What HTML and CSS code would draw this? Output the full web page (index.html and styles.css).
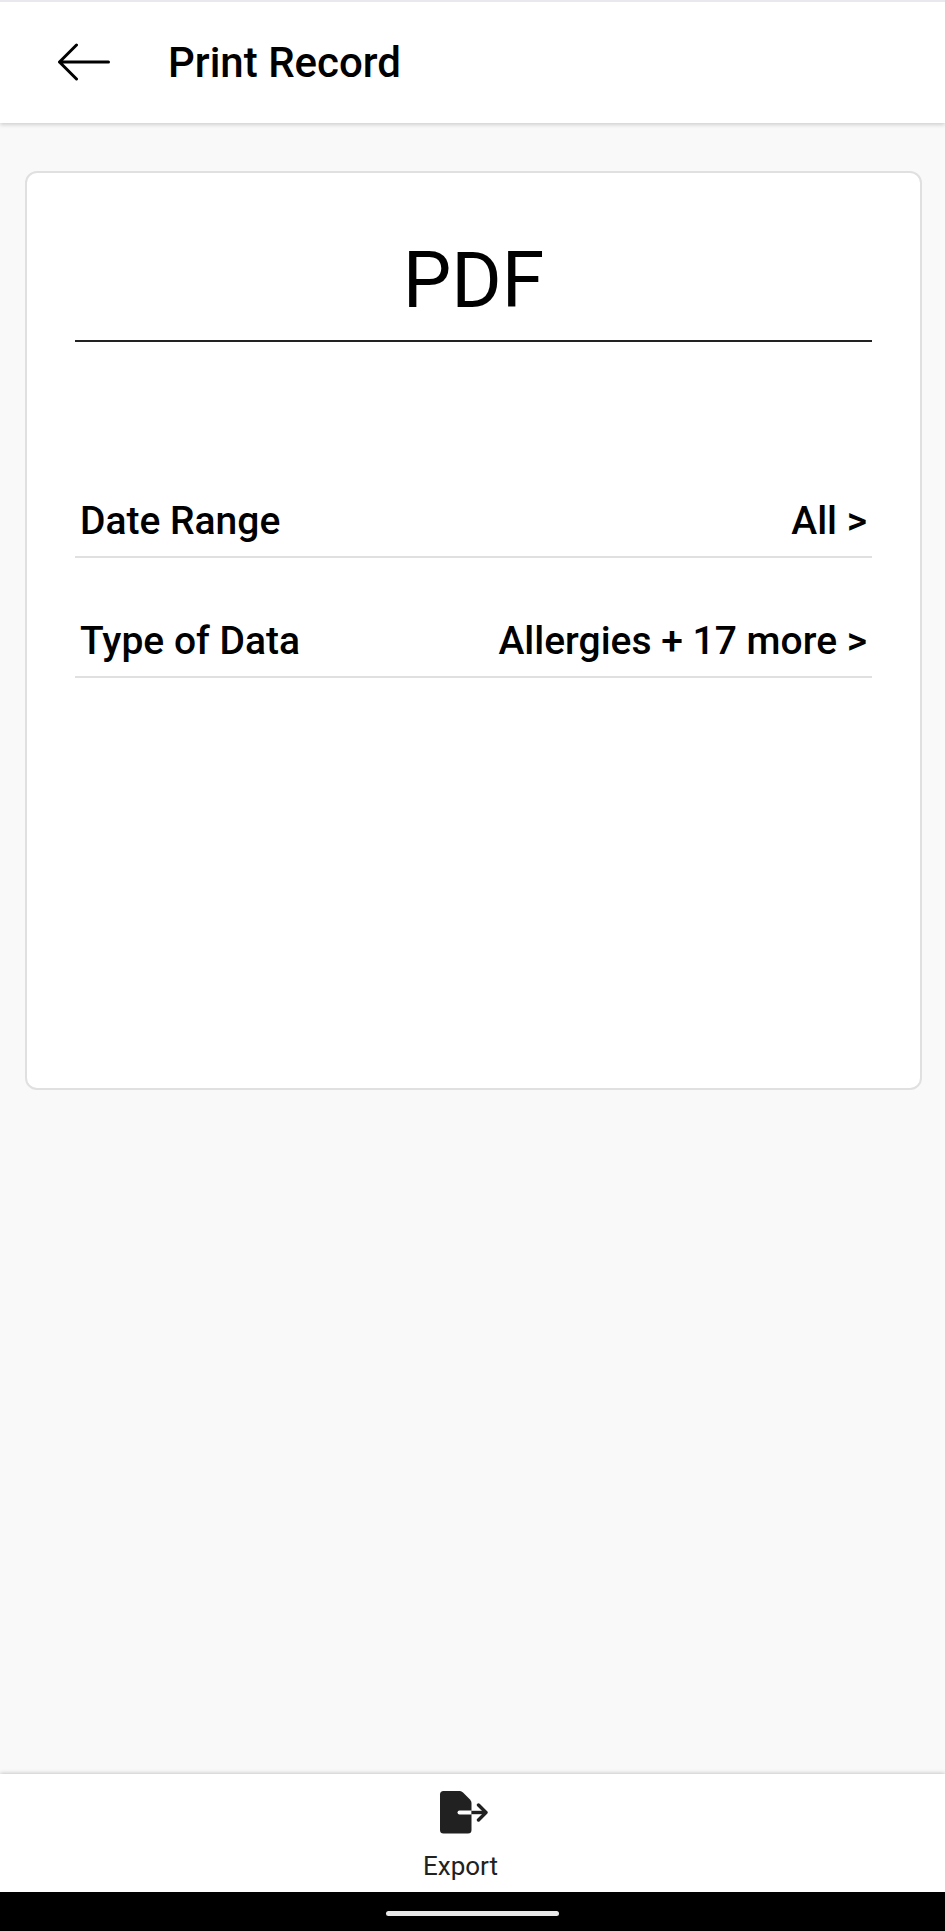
FILE: index.html
```html
<!DOCTYPE html>
<html lang="en">
<head>
  <meta charset="UTF-8">
  <meta name="viewport" content="width=device-width, initial-scale=1">
  <title>Print Record</title>
  <link rel="stylesheet" href="styles.css">
</head>
<body>
  <header class="topbar">
    <button type="button" class="back" aria-label="Back">
      <svg width="56" height="40" viewBox="0 0 56 40" fill="none" stroke="#000" stroke-width="3" stroke-linecap="round" stroke-linejoin="round">
        <path d="M52.500 19H3.500M20.500 2L3.500 19L20.500 36"/>
      </svg>
    </button>
    <h1>Print Record</h1>
  </header>

  <main>
    <section class="card">
      <h2>PDF</h2>
      <button type="button" class="row">
        <span>Date Range</span>
        <span>All &gt;</span>
      </button>
      <button type="button" class="row">
        <span>Type of Data</span>
        <span>Allergies + 17 more &gt;</span>
      </button>
    </section>
  </main>

  <footer class="toolbar">
    <button type="button" class="export">
      <svg width="54" height="44" viewBox="0 0 54 44" fill="none" stroke-linecap="round" stroke-linejoin="round">
        <path fill="#212121" d="M9.500 1H26Q27.500 1 29 2.500L36 9.500Q37.500 11 37.500 13V40Q37.500 43.500 34 43.500H9.500Q6 43.500 6 40V4.500Q6 1 9.500 1Z"/>
        <path fill="#fff" d="M25.500 20.500H37.500V24.500H25.500Q23.500 24.500 23.500 22.500Q23.500 20.500 25.500 20.500Z"/>
        <path stroke="#212121" stroke-width="3.400" stroke-linecap="butt" d="M37.500 22.500H52"/>
        <path stroke="#212121" stroke-width="3.400" d="M44.500 15L52 22.500L44.500 30"/>
      </svg>
      <span>Export</span>
    </button>
  </footer>

  <div class="navbar">
    <div class="pill"></div>
  </div>
</body>
</html>
```

FILE: styles.css
```css
* {
  box-sizing: border-box;
}

body {
  margin: 0;
  min-height: 100vh;
  display: flex;
  flex-direction: column;
  background: #f9f9f9;
  color: #000;
  font-family: Roboto, "Liberation Sans", sans-serif;
}

h1, h2 {
  margin: 0;
}

button {
  padding: 0;
  border: none;
  background: none;
  color: inherit;
  font: inherit;
  cursor: pointer;
}

svg {
  display: block;
}

.topbar {
  display: flex;
  align-items: center;
  gap: 56px;
  height: 123px;
  padding: 0 56px;
  border-top: 2px solid #e8e8ee;
  background: #fff;
  box-shadow: 0 2px 4px rgba(0, 0, 0, 0.16);
}

.topbar h1 {
  font-size: 42px;
  font-weight: 500;
  line-height: 48px;
}

main {
  flex: 1;
  padding: 48px 23px 48px 25px;
}

.card {
  min-height: 919px;
  padding: 48px;
  border: 2px solid #e0e0e0;
  border-radius: 12px;
  background: #fff;
}

.card h2 {
  margin-bottom: 96px;
  padding: 16px 0 15px;
  border-bottom: 2px solid #222;
  font-size: 77px;
  font-weight: 400;
  line-height: 88px;
  text-align: center;
}

.row {
  display: flex;
  justify-content: space-between;
  align-items: flex-end;
  width: 100%;
  height: 120px;
  padding: 0 5px 11px;
  border-bottom: 2px solid #e0e0e0;
  font-size: 39px;
  font-weight: 500;
  line-height: 48px;
}

.toolbar {
  display: flex;
  justify-content: center;
  height: 118px;
  padding: 16px 24px 0 0;
  background: #fff;
  box-shadow: 0 -1px 4px rgba(0, 0, 0, 0.2);
}

.export {
  display: flex;
  flex-direction: column;
  align-items: center;
  gap: 16px;
  color: #212121;
  font-size: 26px;
  line-height: 32px;
}

.navbar {
  display: flex;
  justify-content: center;
  align-items: center;
  height: 39px;
  padding-top: 4px;
  background: #000;
}

.pill {
  width: 173px;
  height: 5px;
  border-radius: 3px;
  background: #e8e8e8;
}
```
